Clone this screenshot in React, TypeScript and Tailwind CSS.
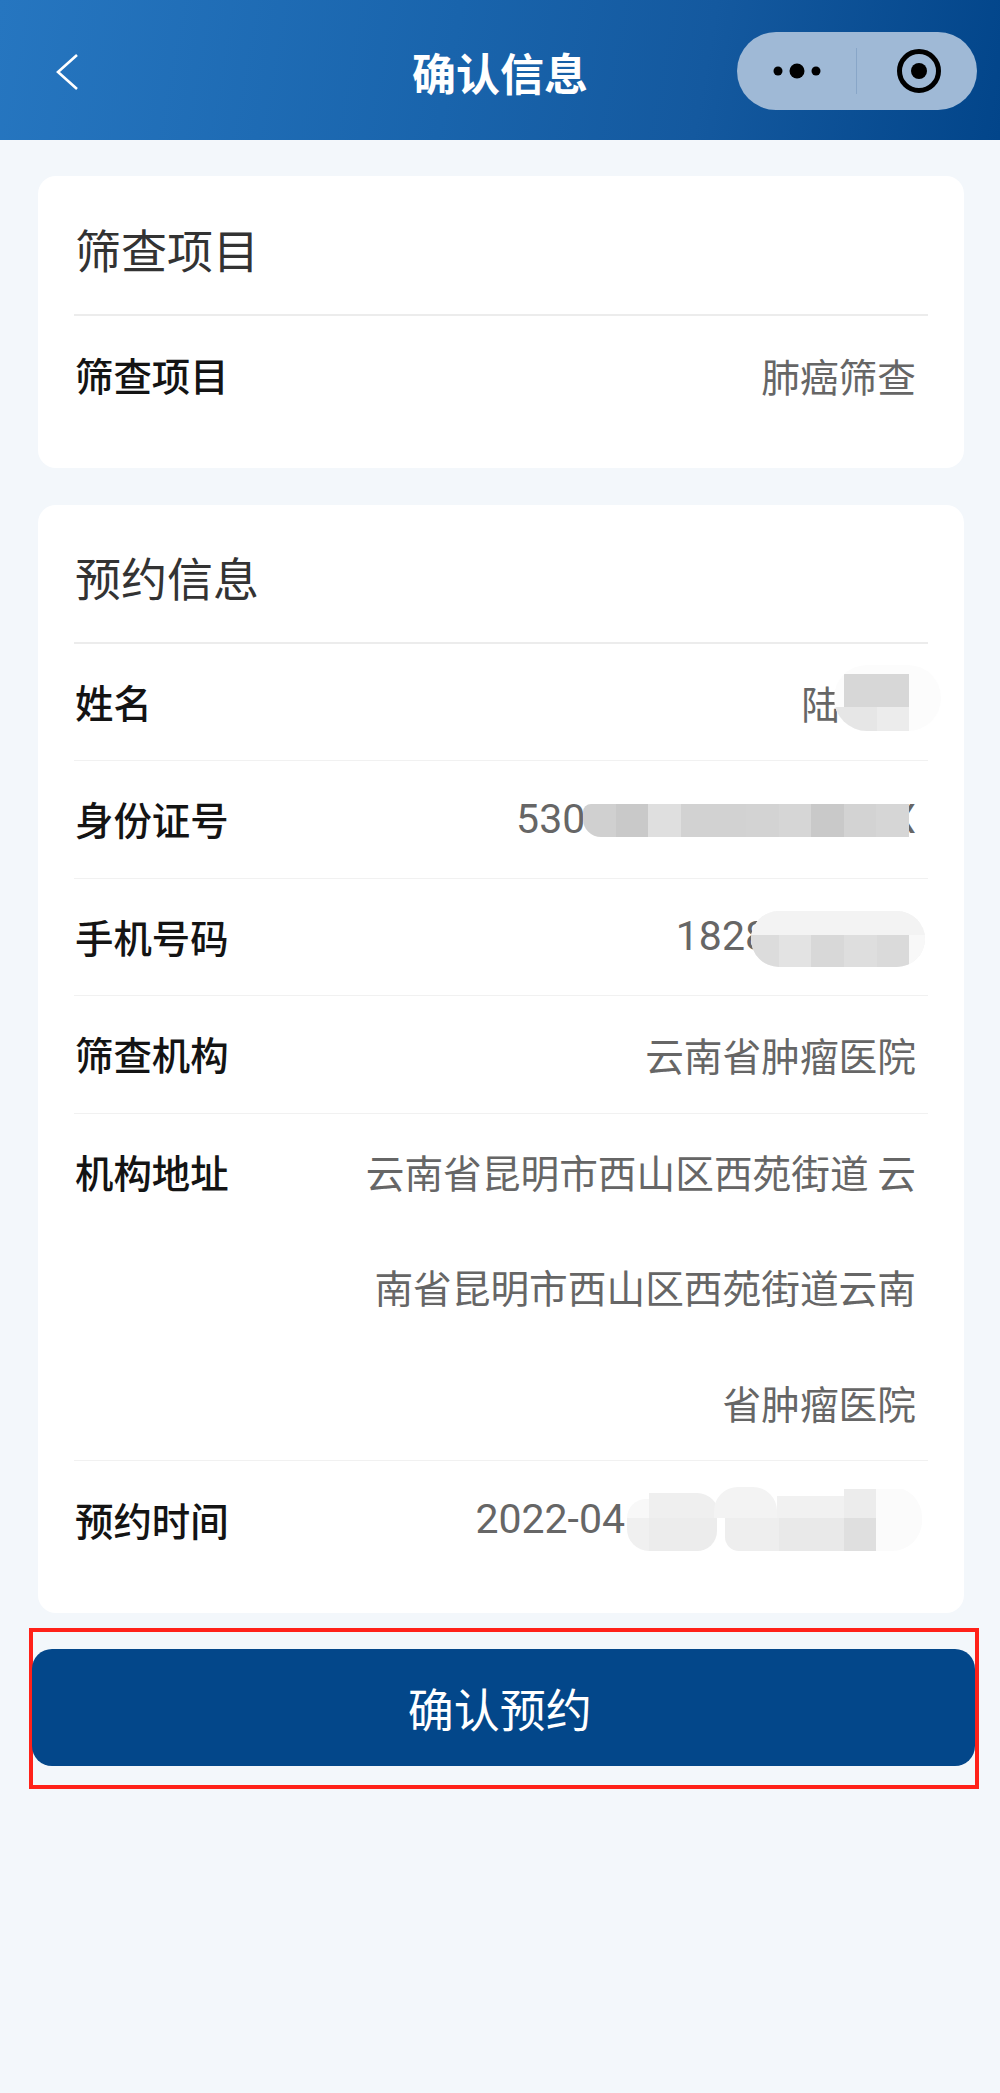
const labelClass = "text-[38.4px] font-medium text-[#141414]";
const valueClass = "text-[38.7px] text-[#666666]";
const digitClass = "font-['Roboto'] text-[41px] text-[#666666]";

type MosaicRow = { height: string; cells: string[] };

// 打码块：每行一组色块，盖在文字上面
function Mosaic({ className, rows }: { className: string; rows: MosaicRow[] }) {
  return (
    <div className={`absolute overflow-hidden ${className}`}>
      {rows.map((row, i) => (
        <div key={i} className={`flex ${row.height}`}>
          {row.cells.map((cell, j) => (
            <div key={j} className={cell} />
          ))}
        </div>
      ))}
    </div>
  );
}

function Row({ label, children, last }: { label: string; children: React.ReactNode; last?: boolean }) {
  return (
    <div className={`relative flex h-[117.5px] items-center justify-between ${last ? "" : "border-b-[1.5px] border-[#f1f1f1]"}`}>
      <span className={`pl-[1px] ${labelClass}`}>{label}</span>
      {children}
    </div>
  );
}

function CardTitle({ children }: { children: string }) {
  return (
    <div className="flex h-[139px] items-center border-b-[2.5px] border-[#ececec] pl-[1px] pt-[6px] text-[46px] text-[#333333]">
      {children}
    </div>
  );
}

export default function App() {
  return (
    <div className="min-h-[2093px] bg-[#f3f7fb] font-['Noto_Sans_CJK_SC','Noto_Sans',sans-serif]">
      <header className="grid h-[140px] grid-cols-[1fr_auto_1fr] items-center bg-[linear-gradient(100deg,#2676c0_0%,#1964ac_45%,#14599f_70%,#02458a_100%)] pt-[3px]">
        <div className="pl-[55px]">
          <svg width="24" height="38" viewBox="0 0 24 38" fill="none" stroke="white" strokeWidth="2.6">
            <path d="M22 2 L3 19 L22 36" />
          </svg>
        </div>
        <h1 className="text-[44px] font-bold text-white">确认信息</h1>
        <div className="flex justify-end pr-[23px]">
          <div className="mb-[1px] flex h-[78px] w-[240px] items-center rounded-full bg-[#9fb9d6]">
            <div className="flex h-[46px] w-[120px] items-center justify-center border-r-[1.5px] border-[#88a6c8]">
              <svg width="48" height="16" viewBox="0 0 48 16" fill="#000000">
                <circle cx="5" cy="8" r="4.5" />
                <circle cx="24" cy="8" r="7.5" />
                <circle cx="43" cy="8" r="4.5" />
              </svg>
            </div>
            <div className="flex flex-1 items-center justify-center pl-[3px]">
              <svg width="46" height="46" viewBox="0 0 46 46">
                <circle cx="23" cy="23" r="19.5" fill="none" stroke="#000000" strokeWidth="5" />
                <circle cx="23" cy="23" r="8" fill="#000000" />
              </svg>
            </div>
          </div>
        </div>
      </header>

      <main className="ml-[38px] mr-[36px] pt-[36px]">
        <section className="rounded-[18px] bg-white px-[36px] pb-[34px] pt-[1px]">
          <CardTitle>筛查项目</CardTitle>
          <Row label="筛查项目" last>
            <span className={`pr-[12px] ${valueClass}`}>肺癌筛查</span>
          </Row>
        </section>

        <section className="mt-[37px] rounded-[18px] bg-white px-[36px] pb-[34px]">
          <CardTitle>预约信息</CardTitle>
          <Row label="姓名">
            <span className={`pr-[88px] ${valueClass}`}>陆</span>
            <Mosaic
              className="-right-[13px] top-[21px] h-[66px] w-[107px] rounded-[33px] bg-[#fcfcfc]"
              rows={[
                { height: "h-[9px]", cells: [] },
                { height: "h-[33px]", cells: ["w-[10px]", "w-[65px] bg-[#d7d7d7]"] },
                { height: "h-[24px]", cells: ["w-[43px] bg-[#e6e6e6]", "w-[32px] bg-[#ececec]"] },
              ]}
            />
          </Row>
          <Row label="身份证号">
            <span className={`flex pr-[12px] ${digitClass}`}>
              5303<span className="ml-[282px]">X</span>
            </span>
            <Mosaic
              className="right-[19px] top-[43px] h-[33px] w-[326px] rounded-bl-[18px] rounded-tl-[8px]"
              rows={[
                {
                  height: "h-[33px]",
                  cells: [
                    "flex-1 bg-[#d0d0d0]",
                    "flex-1 bg-[#c9c9c9]",
                    "flex-1 bg-[#dfdfdf]",
                    "flex-1 bg-[#d2d2d2]",
                    "flex-1 bg-[#d2d2d2]",
                    "flex-1 bg-[#d3d3d3]",
                    "flex-1 bg-[#d6d6d6]",
                    "flex-1 bg-[#c9c9c9]",
                    "flex-1 bg-[#d3d3d3]",
                    "flex-1 bg-[#d6d6d6]",
                  ],
                },
              ]}
            />
          </Row>
          <Row label="手机号码">
            <span className={`pr-[160px] ${digitClass}`}>1828</span>
            <Mosaic
              className="right-[3px] top-[32px] h-[56px] w-[174px] rounded-[28px] bg-[#f3f3f3]"
              rows={[
                { height: "h-[24px]", cells: ["w-full bg-[#f3f3f3]"] },
                {
                  height: "h-[32px]",
                  cells: [
                    "w-[28px] bg-[#dcdcdc]",
                    "w-[32px] bg-[#e3e3e3]",
                    "w-[33px] bg-[#d8d8d8]",
                    "w-[33px] bg-[#dedede]",
                    "w-[32px] bg-[#dadada]",
                    "w-[16px] bg-[#f8f8f8]",
                  ],
                },
              ]}
            />
          </Row>
          <Row label="筛查机构">
            <span className={`pr-[12px] ${valueClass}`}>云南省肿瘤医院</span>
          </Row>
          <div className="flex items-start justify-between border-b-[1.5px] border-[#f1f1f1]">
            <span className={`pl-[1px] leading-[115.5px] ${labelClass}`}>机构地址</span>
            <p className={`w-[570px] pr-[12px] text-right leading-[115.5px] ${valueClass}`}>
              云南省昆明市西山区西苑街道 云南省昆明市西山区西苑街道云南省肿瘤医院
            </p>
          </div>
          <Row label="预约时间" last>
            <span className={`pr-[303px] ${digitClass}`}>2022-04</span>
            <Mosaic
              className="right-[6px] top-[26px] h-[64px] w-[295px] rounded-r-[30px]"
              rows={[
                {
                  height: "h-[31px]",
                  cells: [
                    "mt-[12px] w-[22px] rounded-tl-[20px] bg-[#f8f8f8]",
                    "mt-[6px] w-[70px] rounded-tr-[22px] bg-[#efefef]",
                    "-ml-[5px] w-[63px] rounded-t-[24px] bg-[#f3f3f3]",
                    "mt-[9px] w-[67px] bg-[#f1f1f1]",
                    "mt-[2px] w-[32px] bg-[#ececec]",
                    "mt-[2px] w-[46px] bg-[#fbfbfb]",
                  ],
                },
                {
                  height: "h-[33px]",
                  cells: [
                    "w-[22px] rounded-bl-[24px] bg-[#f0f0f0]",
                    "w-[68px] rounded-br-[20px] bg-[#ececec]",
                    "w-[8px]",
                    "w-[54px] rounded-bl-[14px] bg-[#eeeeee]",
                    "w-[65px] bg-[#e9e9e9]",
                    "w-[32px] bg-[#dfdfdf]",
                    "w-[46px] bg-[#fbfbfb]",
                  ],
                },
              ]}
            />
          </Row>
        </section>

        {/* 红框标注 */}
        <div className="-ml-[9px] -mr-[15px] mt-[15px] flex h-[161px] items-center border-[4.5px] border-[#ff2119] pb-[1px]">
          <button className="relative -ml-[1.5px] h-[117px] flex-1 rounded-[20px] bg-[#03478a] pr-[7px] text-[46px] text-white">
            确认预约
          </button>
        </div>
      </main>
    </div>
  );
}
